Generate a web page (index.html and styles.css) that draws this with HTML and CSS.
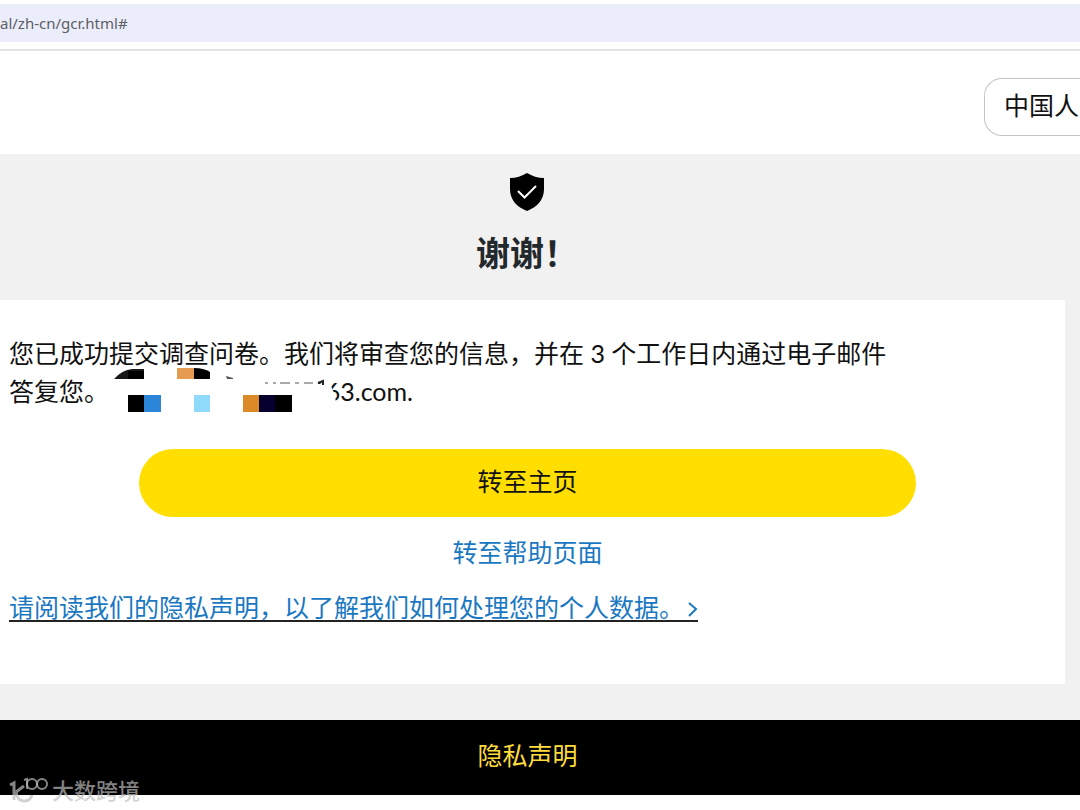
FILE: index.html
```
<!DOCTYPE html>
<html lang="zh-CN">
<head>
    <meta charset="UTF-8">
    <meta name="viewport" content="width=device-width, initial-scale=1.0">
    <title>谢谢！</title>
    <link rel="stylesheet" href="styles.css">
</head>
<body>
    <div class="browser-bar">
        <div class="address">al/zh-cn/gcr.html#</div>
    </div>

    <header class="site-header">
        <button class="region-button" type="button">中国人</button>
    </header>

    <main class="page">
        <div class="page-title">
            <svg class="shield" viewBox="0 0 36 40" aria-hidden="true">
                <path d="M18 1 C13 4 7 6 1 6 V17 C1 28 8 35 18 39 C28 35 35 28 35 17 V6 C29 6 23 4 18 1 Z" fill="#000"/>
                <path d="M9 19 L15.500 25.500 L27 14" fill="none" stroke="#fff" stroke-width="2"/>
            </svg>
            <h1>谢谢！</h1>
        </div>

        <section class="card">
            <p class="message">
                您已成功提交调查问卷。我们将审查您的信息，并在 3 个工作日内通过电子邮件<br>答复您。<span class="email">163.com.
                    <svg class="mosaic" viewBox="0 0 236 50" aria-hidden="true">
                        <path d="M0 13 H150 V18 H214 Q222 18 222 23 Q228 32 224 42 V50 H0 Z" fill="#fff"/>
                        <path d="M4 13 Q12 4 22 3 H34 V13 Z" fill="#181818"/>
                        <rect x="18" y="5" width="16" height="8" fill="#000"/>
                        <rect x="67" y="2" width="17" height="11" fill="#e59b50"/>
                        <path d="M84 2 Q94 2 100 6 V13 H84 Z" fill="#000"/>
                        <path d="M116 10 L123 12 V13 H117 Z" fill="#555"/>
                        <path d="M155 17 H158 M163 17 H166 M170 17 H180 M185 17 H189 M194 17 H203" fill="none" stroke="#555" stroke-width="1"/>
                        <path d="M208 17 L213 15 V19" fill="none" stroke="#222" stroke-width="2"/>
                        <rect x="18" y="29" width="17" height="17" fill="#000"/>
                        <rect x="34" y="29" width="17" height="17" fill="#2b86d9"/>
                        <rect x="84" y="29" width="16" height="17" fill="#8fd9fb"/>
                        <rect x="133" y="29" width="17" height="17" fill="#dc8a28"/>
                        <rect x="149" y="29" width="17" height="17" fill="#06002f"/>
                        <rect x="165" y="29" width="17" height="17" fill="#000"/>
                    </svg>
                </span>
            </p>
            <button class="home-button" type="button">转至主页</button>
            <a class="help-link" href="#">转至帮助页面</a>
            <a class="privacy-link" href="#">请阅读我们的隐私声明，以了解我们如何处理您的个人数据。<svg class="chevron" viewBox="0 0 14 20" aria-hidden="true"><path d="M5 5 L12 11 L5 18" fill="none" stroke="#1a78c2" stroke-width="2"/></svg></a>
        </section>
    </main>

    <footer class="site-footer">
        <a href="#">隐私声明</a>
    </footer>

    <div class="watermark">
        <svg viewBox="0 0 40 28" aria-hidden="true">
            <path d="M1 8 L5 6 V23 M15 9 L7 15 M7 15 C8 21 11 24 15 24 C19 24 22 22 23 18" fill="none" stroke="currentColor" stroke-width="3"/>
            <path d="M15 3 L18 2 V12" fill="none" stroke="currentColor" stroke-width="2"/>
            <circle cx="23" cy="7" r="5" fill="none" stroke="currentColor" stroke-width="2"/>
            <circle cx="33" cy="7" r="5" fill="none" stroke="currentColor" stroke-width="2"/>
        </svg>
        <span>大数跨境</span>
    </div>
</body>
</html>
```
FILE: styles.css
```
* {
    box-sizing: border-box;
}

body {
    margin: 0;
    position: relative;
    min-height: 100vh;
    background-color: #fff;
    color: #111;
    font-family: Lato, "Noto Sans CJK SC", sans-serif;
    font-size: 25px;
    line-height: 38px;
}

button {
    font: inherit;
    color: inherit;
    cursor: pointer;
}

.browser-bar {
    padding: 4px 0 7px;
    border-bottom: 2px solid #e4e4e4;
}

.address {
    padding-top: 1px;
    background-color: #ebeefa;
    color: #5c5e66;
    font-family: "Noto Sans", sans-serif;
    font-size: 15px;
    line-height: 37px;
}

.site-header {
    display: flex;
    justify-content: flex-end;
    padding: 27px 0 18px;
    overflow: hidden;
}

.region-button {
    height: 58px;
    padding: 0 1px 4px 19px;
    background-color: #fff;
    border: 1px solid #c4c4c4;
    border-right: none;
    border-radius: 18px 0 0 18px;
}

.page {
    padding: 18px 15px 36px 0;
    background-color: #f1f1f1;
}

.page-title {
    display: flex;
    flex-direction: column;
    align-items: center;
    padding-right: 11px;
}

.shield {
    width: 36px;
    height: 40px;
}

h1 {
    margin: 16px 0 24px;
    color: #23282d;
    font-family: "Noto Sans CJK SC", sans-serif;
    font-size: 34px;
    line-height: 48px;
}

.card {
    display: flex;
    flex-direction: column;
    align-items: center;
    padding: 34px 19px 62px 9px;
    background-color: #fff;
}

.message {
    align-self: flex-start;
    margin: 0 0 39px;
}

.email {
    position: relative;
    display: inline-block;
    width: 304px;
    text-align: right;
}

/* pixelated blocks over the hidden part of the address */
.mosaic {
    position: absolute;
    top: -6px;
    left: 1px;
    width: 236px;
    height: 50px;
}

.home-button {
    width: 75%;
    height: 68px;
    padding: 0 0 4px;
    background-color: #ffde00;
    border: none;
    border-radius: 34px;
}

.help-link {
    margin: 16px 0 24px;
    color: #1a78c2;
    text-decoration: none;
}

.privacy-link {
    display: flex;
    align-items: center;
    align-self: flex-start;
    border-bottom: 2px solid #222;
    color: #1a78c2;
    line-height: 25px;
    text-decoration: none;
}

.chevron {
    width: 14px;
    height: 20px;
}

.site-footer {
    display: flex;
    justify-content: center;
    padding: 16px 25px 21px 0;
    background-color: #000;
}

.site-footer a {
    color: #ffdc3c;
    text-decoration: none;
}

.watermark {
    position: absolute;
    left: 9px;
    bottom: 5px;
    display: flex;
    align-items: center;
    gap: 3px;
    color: rgba(190, 190, 190, 0.7);
    font-size: 22px;
    font-weight: 500;
    line-height: 28px;
}

.watermark svg {
    width: 40px;
    height: 28px;
}
```
